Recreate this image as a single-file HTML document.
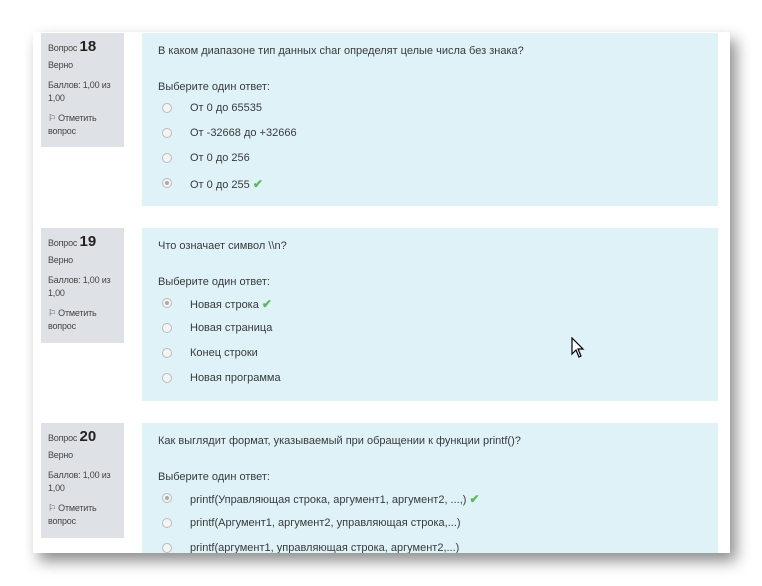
<html><head><style>
body{margin:0;width:762px;height:586px;background:#fff;position:relative;overflow:hidden;font-family:"Liberation Sans",sans-serif;color:#333}
.page{position:absolute;left:33px;top:32px;width:697px;height:521px;background:#fff;box-shadow:6px 8px 14px rgba(0,0,0,.45);overflow:hidden}
.info{position:absolute;left:8px;width:83px;background:#dee2e6;font-size:9px;letter-spacing:-0.2px;color:#444;padding:0 7px;box-sizing:border-box;line-height:13px}
.info .n{font-size:15px;font-weight:bold;color:#222;letter-spacing:0}
.q{position:absolute;left:109px;width:576px;background:#def2f8;font-size:11px;color:#3a3a3a}
.q .t{position:absolute;left:16px;top:12px}
.q .s{position:absolute;left:16px;top:48px}
.o{position:absolute;left:48px}
.r{position:absolute;left:-28px;top:1px;width:8px;height:8px;border:1px solid #bbb;border-radius:50%;background:#f4f4f4}
.r.c::after{content:"";position:absolute;left:2px;top:2px;width:4px;height:4px;border-radius:50%;background:#aaa}
.ck{color:#5cb85c;font-weight:bold;font-size:12px}
</style></head><body>
<div class="page">
<div class="info" style="top:1px;height:114px"><div style="margin-top:7px">Вопрос <span class="n">18</span></div><div style="margin-top:4px">Верно</div><div style="margin-top:7px">Баллов: 1,00 из 1,00</div><div style="margin-top:7px">⚐ Отметить вопрос</div></div>
<div class="q" style="top:1px;height:173px"><div class="t">В каком диапазоне тип данных char определят целые числа без знака?</div><div class="s">Выберите один ответ:</div>
<div class="o" style="top:69px"><span class="r"></span>От 0 до 65535</div>
<div class="o" style="top:94px"><span class="r"></span>От -32668 до +32666</div>
<div class="o" style="top:119px"><span class="r"></span>От 0 до 256</div>
<div class="o" style="top:144px"><span class="r c"></span>От 0 до 255 <span class="ck">✔</span></div></div>

<div class="info" style="top:196px;height:115px"><div style="margin-top:7px">Вопрос <span class="n">19</span></div><div style="margin-top:4px">Верно</div><div style="margin-top:7px">Баллов: 1,00 из 1,00</div><div style="margin-top:7px">⚐ Отметить вопрос</div></div>
<div class="q" style="top:196px;height:173px"><div class="t">Что означает символ \\n?</div><div class="s">Выберите один ответ:</div>
<div class="o" style="top:69px"><span class="r c"></span>Новая строка <span class="ck">✔</span></div>
<div class="o" style="top:94px"><span class="r"></span>Новая страница</div>
<div class="o" style="top:119px"><span class="r"></span>Конец строки</div>
<div class="o" style="top:144px"><span class="r"></span>Новая программа</div></div>

<div class="info" style="top:391px;height:115px"><div style="margin-top:7px">Вопрос <span class="n">20</span></div><div style="margin-top:4px">Верно</div><div style="margin-top:7px">Баллов: 1,00 из 1,00</div><div style="margin-top:7px">⚐ Отметить вопрос</div></div>
<div class="q" style="top:391px;height:173px"><div class="t">Как выглядит формат, указываемый при обращении к функции printf()?</div><div class="s">Выберите один ответ:</div>
<div class="o" style="top:69px"><span class="r c"></span>printf(Управляющая строка, аргумент1, аргумент2, ...,) <span class="ck">✔</span></div>
<div class="o" style="top:94px"><span class="r"></span>printf(Аргумент1, аргумент2, управляющая строка,...)</div>
<div class="o" style="top:119px"><span class="r"></span>printf(аргумент1, управляющая строка, аргумент2,...)</div></div>
</div>
<svg style="position:absolute;left:571px;top:337px" width="14" height="22" viewBox="0 0 14 22"><path d="M1 1 L1 17 L5 13 L8 20 L10 19 L7 12 L12 12 Z" fill="#fff" stroke="#000" stroke-width="1.2"/></svg>
</body></html>
